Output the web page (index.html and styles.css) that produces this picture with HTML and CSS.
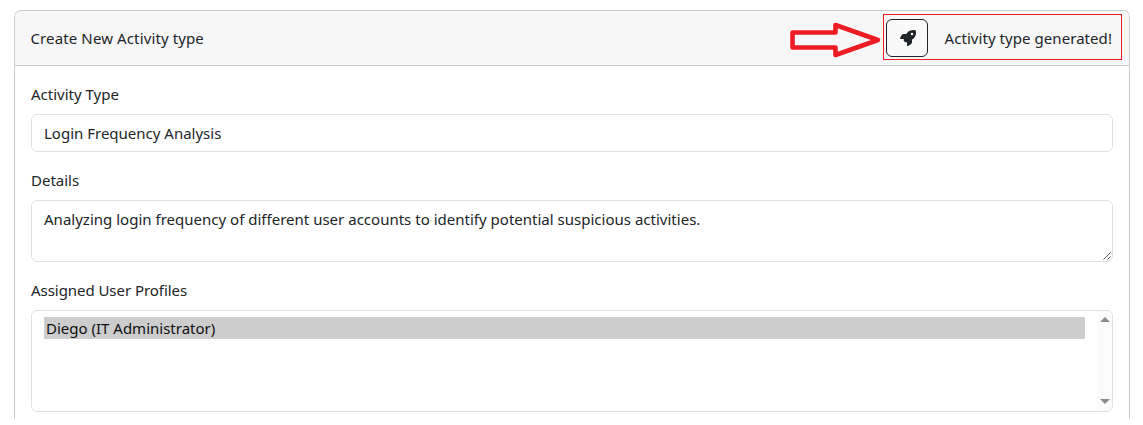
FILE: index.html
```html
<!DOCTYPE html>
<html lang="en">
<head>
<meta charset="utf-8">
<title>Create New Activity type</title>
<link rel="stylesheet" href="styles.css">
</head>
<body>
<main class="card">
  <header class="card-header">
    <span class="title">Create New Activity type</span>
    <svg class="arrow" width="94" height="38" viewBox="0 0 94 38"><path d="M3.5 11.5H46.5V4L89 19L46.5 34V26.5H3.5Z" fill="none" stroke="#ed1c24" stroke-width="4.6" stroke-linejoin="round"/></svg>
    <div class="callout">
      <button class="generate" aria-label="Generate"><svg width="16" height="16" viewBox="0 0 512 512"><path fill="#212529" d="M156.6 384.9L125.7 354c-8.5-8.5-11.5-20.8-7.7-32.2c3-8.9 7-20.5 11.8-33.8L24 288c-8.6 0-16.6-4.6-20.9-12.1s-4.2-16.7 .2-24.1l52.5-88.5c13-21.9 36.5-35.3 61.9-35.3l82.3 0c2.4-4 4.8-7.7 7.2-11.3C289.1-4.1 411.1-8.1 483.9 5.3c11.6 2.1 20.6 11.2 22.8 22.8c13.4 72.9 9.3 194.8-111.4 276.7c-3.5 2.4-7.3 4.8-11.3 7.2v82.3c0 25.4-13.4 49-35.3 61.9l-88.5 52.5c-7.4 4.4-16.6 4.5-24.1 .2s-12.1-12.2-12.1-20.9V380.8c-14.1 4.9-26.4 8.9-35.7 11.9c-11.2 3.6-23.4 .5-31.8-7.8zM384 168a40 40 0 1 0 0-80 40 40 0 1 0 0 80z"/></svg></button>
      <span class="status">Activity type generated!</span>
    </div>
  </header>
  <div class="card-body">
    <div class="label">Activity Type</div>
    <div class="control">Login Frequency Analysis</div>
    <div class="label">Details</div>
    <div class="control area">Analyzing login frequency of different user accounts to identify potential suspicious activities.
      <svg class="grip" width="8" height="8" viewBox="0 0 8 8"><path d="M.5 7.5L7.5 .5M4.5 7.5L7.5 4.5" stroke="#555" stroke-width="1"/></svg>
    </div>
    <div class="label assigned">Assigned User Profiles</div>
    <div class="control list">
      <div class="option">Diego (IT Administrator)</div>
      <div class="scrollbar">
        <svg width="10" height="5" viewBox="0 0 10 5"><path d="M0 5L5 0L10 5Z" fill="#8b8b8b"/></svg>
        <svg width="10" height="5" viewBox="0 0 10 5"><path d="M0 0H10L5 5Z" fill="#8b8b8b"/></svg>
      </div>
    </div>
  </div>
</main>
</body>
</html>
```
FILE: styles.css
```css
* { box-sizing: border-box; }
body {
  margin: 0;
  padding: 10px 13px 0 14px;
  background: #fff;
  color: #212529;
  font: 15px/24px "Noto Sans", "Open Sans", sans-serif;
  white-space: nowrap;
}
.card {
  height: 409px;
  border: 1px solid #cdcdcd;
  border-bottom: 0;
  border-radius: 7px 7px 0 0;
}
.card-header {
  display: flex;
  height: 55px;
  padding: 3px 7px 0 15.5px;
  background: #f7f7f7;
  border-bottom: 1px solid #cdcdcd;
  border-radius: 6px 6px 0 0;
}
.title { flex: 1; padding-top: 12px; letter-spacing: 0.12px; }
.arrow { margin-top: 7px; }
.callout {
  display: flex;
  width: 239px;
  height: 46px;
  padding: 4px 0 0 2px;
  border: 1px solid #ed1c24;
}
.generate {
  display: grid;
  place-items: center;
  width: 42px;
  height: 38px;
  padding: 0 0 0 1px;
  background: #f9f9fa;
  border: 1px solid #212529;
  border-radius: 6px;
}
.status { margin: 7px 0 0 16.5px; letter-spacing: 0.06px; }
.card-body { padding: 16px 16px 0; }
.label { height: 24px; margin-bottom: 8px; }
.assigned { letter-spacing: -0.05px; }
.control {
  position: relative;
  height: 38px;
  margin-bottom: 16px;
  padding: 6px 12px;
  border: 1px solid #dee2e6;
  border-radius: 6px;
}
.area { height: 62px; letter-spacing: 0.01px; }
.grip { position: absolute; right: 1px; bottom: 1px; }
.list {
  display: flex;
  gap: 12px;
  height: 102px;
  padding: 6px 0 0 12px;
}
.option {
  flex: 1;
  height: 22px;
  padding-left: 2px;
  background: #cdcdcd;
  color: #101010;
  line-height: 22px;
}
.scrollbar {
  display: flex;
  flex-direction: column;
  justify-content: space-between;
  align-items: center;
  width: 15px;
  height: 100px;
  margin-top: -6px;
  padding: 6px 0 7px;
  background: #fbfbfb;
  border-radius: 0 5px 5px 0;
}
```
